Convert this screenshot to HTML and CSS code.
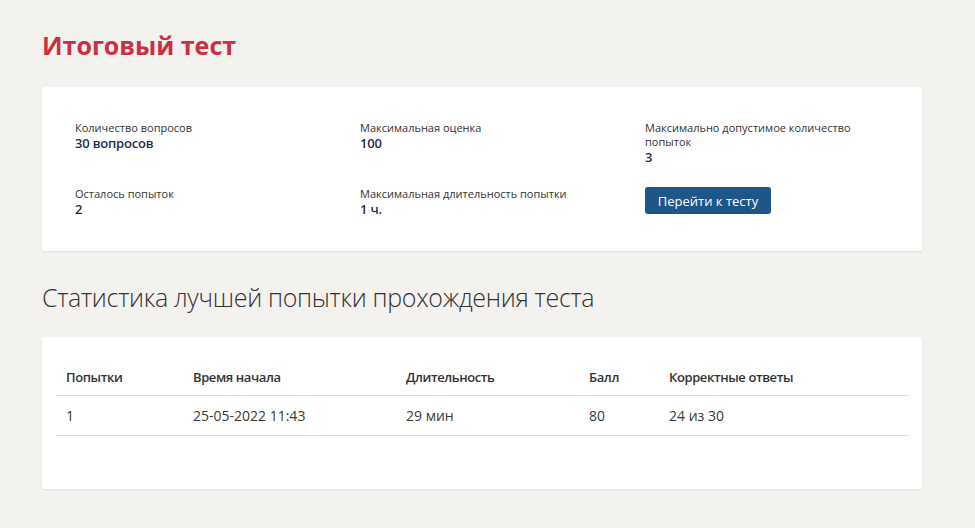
FILE: index.html
```html
<!DOCTYPE html>
<html lang="ru">
<head>
<meta charset="utf-8">
<link rel="stylesheet" href="styles.css">
</head>
<body>
<div class="page">
  <h1 class="title">Итоговый тест</h1>
  <section class="card info">
    <div class="grid">
      <div class="item">
        <div class="label">Количество вопросов</div>
        <div class="value">30 вопросов</div>
      </div>
      <div class="item">
        <div class="label">Максимальная оценка</div>
        <div class="value">100</div>
      </div>
      <div class="item">
        <div class="label">Максимально допустимое количество попыток</div>
        <div class="value">3</div>
      </div>
      <div class="item">
        <div class="label">Осталось попыток</div>
        <div class="value">2</div>
      </div>
      <div class="item">
        <div class="label">Максимальная длительность попытки</div>
        <div class="value">1 ч.</div>
      </div>
      <div class="item">
        <button class="btn">Перейти к тесту</button>
      </div>
    </div>
  </section>
  <h2 class="subtitle">Статистика лучшей попытки прохождения теста</h2>
  <section class="card stats">
    <table class="table">
      <thead>
        <tr>
          <th class="c1">Попытки</th>
          <th class="c2">Время начала</th>
          <th class="c3">Длительность</th>
          <th class="c4">Балл</th>
          <th class="c5">Корректные ответы</th>
        </tr>
      </thead>
      <tbody>
        <tr>
          <td>1</td>
          <td>25-05-2022 11:43</td>
          <td>29 мин</td>
          <td>80</td>
          <td>24 из 30</td>
        </tr>
      </tbody>
    </table>
  </section>
</div>
</body>
</html>
```
FILE: styles.css
```css
html, body {
  margin: 0;
  padding: 0;
}
body {
  background: #f3f2ef;
  font-family: "Open Sans", "Liberation Sans", sans-serif;
  color: #333;
}
.page {
  padding: 27px 53px 40px 42px;
}
.title {
  margin: 0;
  font-size: 25px;
  font-weight: 700;
  color: #cc2f41;
  line-height: 36px;
}
.card {
  background: #fff;
  border-radius: 3px;
  box-shadow: 0 1px 2px rgba(0,0,0,0.08);
}
.info {
  margin-top: 24px;
  padding: 34px 33px 34px 33px;
}
.grid {
  display: grid;
  grid-template-columns: 285px 285px 215px;
  row-gap: 22px;
}
.label {
  font-size: 11px;
  line-height: 14px;
  color: #333;
}
.value {
  font-size: 13px;
  font-weight: 600;
  line-height: 16px;
  color: #1c2f4e;
  letter-spacing: -0.2px;
}
.btn {
  display: block;
  width: 126px;
  height: 27px;
  border: none;
  border-radius: 3px;
  background: #1e5688;
  color: #fff;
  font-family: "Open Sans", "Liberation Sans", sans-serif;
  font-size: 13px;
  padding: 0;
  margin-top: 0;
}
.subtitle {
  margin: 31px 0 0;
  font-family: "Open Sans", "Liberation Sans", sans-serif;
  font-weight: 300;
  font-size: 25px;
  line-height: 30px;
  color: #333;
  letter-spacing: -0.3px;
}
.stats {
  margin-top: 25px;
  padding: 22px 13px 53px 14px;
}
.table {
  width: 100%;
  border-collapse: collapse;
  font-size: 14px;
  color: #3a3a3a;
}
.table th {
  text-align: left;
  font-size: 13px;
  font-weight: 600;
  letter-spacing: -0.4px;
  height: 36px;
  padding: 0 10px;
  border-bottom: 1px solid #e0e0e0;
  vertical-align: middle;
  color: #333;
}
.table td {
  height: 39px;
  padding: 0 10px;
  border-bottom: 1px solid #e0e0e0;
  vertical-align: middle;
}
.c1 { width: 107px; }
.c2 { width: 193px; }
.c3 { width: 163px; }
.c4 { width: 60px; }
```
